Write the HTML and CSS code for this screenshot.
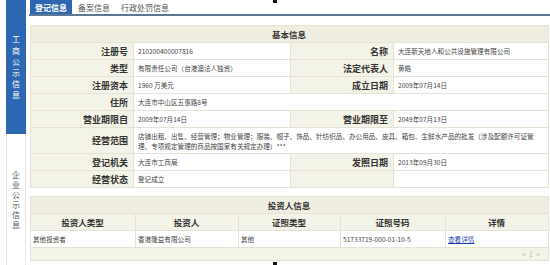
FILE: index.html
```html
<!DOCTYPE html>
<html lang="zh-CN">
  <head>
    <meta charset="UTF-8" />
    <title>登记信息</title>
    <link rel="stylesheet" href="styles.css">
  </head>
  <body>
    <div class="page">
      <div class="side">
        <div class="side-item active">
          <span>工</span><span>商</span><span>公</span><span>示</span><span>信</span><span>息</span>
        </div>
        <div class="side-item">
          <span>企</span><span>业</span><span>公</span><span>示</span><span>信</span><span>息</span>
        </div>
      </div>

      <div class="main">
        <div class="tabs">
          <a class="tab current">登记信息</a>
          <a class="tab">备案信息</a>
          <a class="tab">行政处罚信息</a>
        </div>

        <!-- 基本信息 -->
        <table class="info base">
          <colgroup>
            <col style="width: 103px" />
            <col style="width: 157px" />
            <col style="width: 103px" />
            <col style="width: 155px" />
          </colgroup>
          <tr class="title">
            <th colspan="4">基本信息</th>
          </tr>
          <tr>
            <th>注册号</th>
            <td>210200400007816</td>
            <th>名称</th>
            <td>大连新天地人和公共设施管理有限公司</td>
          </tr>
          <tr>
            <th>类型</th>
            <td>有限责任公司（台港澳法人独资）</td>
            <th>法定代表人</th>
            <td>黄皓</td>
          </tr>
          <tr>
            <th>注册资本</th>
            <td>1960 万美元</td>
            <th>成立日期</th>
            <td>2009年07月14日</td>
          </tr>
          <tr>
            <th>住所</th>
            <td colspan="3">大连市中山区五惠路8号</td>
          </tr>
          <tr>
            <th>营业期限自</th>
            <td>2009年07月14日</td>
            <th>营业期限至</th>
            <td>2049年07月13日</td>
          </tr>
          <tr class="tall">
            <th>经营范围</th>
            <td colspan="3" class="scope">店铺出租、出售、经营管理；物业管理；服装、帽子、饰品、针纺织品、办公用品、皮具、箱包、生鲜水产品的批发（涉及配额许可证管<br />理、专项规定管理的商品按国家有关规定办理）***</td>
          </tr>
          <tr>
            <th>登记机关</th>
            <td>大连市工商局</td>
            <th>发照日期</th>
            <td>2013年09月30日</td>
          </tr>
          <tr>
            <th>经营状态</th>
            <td>登记成立</td>
            <th></th>
            <td></td>
          </tr>
        </table>

        <!-- 投资人信息 -->
        <table class="info investors">
          <colgroup>
            <col style="width: 105px" />
            <col style="width: 103px" />
            <col style="width: 102px" />
            <col style="width: 105px" />
            <col style="width: 103px" />
          </colgroup>
          <tr class="title">
            <th colspan="5">投资人信息</th>
          </tr>
          <tr class="head">
            <th>投资人类型</th>
            <th>投资人</th>
            <th>证照类型</th>
            <th>证照号码</th>
            <th>详情</th>
          </tr>
          <tr>
            <td>其他投资者</td>
            <td>香港隆益有限公司</td>
            <td>其他</td>
            <td>51733719-000-01-10-5</td>
            <td><a class="detail">查看详情</a></td>
          </tr>
          <tr class="pager">
            <td colspan="5"><span>&lt;&nbsp; 1 &nbsp;&gt;</span></td>
          </tr>
        </table>
      </div>
    </div>

    <i class="marker top"></i>
    <i class="marker bottom"></i>
  </body>
</html>
```

FILE: styles.css
```css
body {
  margin: 0;
  background: #fff;
  font-family: "Noto Sans CJK SC", "Liberation Sans", sans-serif;
  color: #333;
  height: 265px;
  overflow: hidden;
  position: relative;
}

.page {
  display: flex;
  align-items: flex-start;
}

/* 左侧栏 */
.side {
  margin-left: 6px;
  width: 20px;
  display: flex;
  flex-direction: column;
}

.side-item {
  height: 131px;
  display: flex;
  flex-direction: column;
  align-items: center;
  justify-content: center;
  font-size: 8px;
  line-height: 10px;
  color: #555;
  border: 1px solid #e6e6e6;
  border-top: none;
}

.side-item.active {
  height: 134px;
  line-height: 11.2px;
  background: #2e67b1;
  color: #fff;
  border: none;
}

.main {
  flex: 1;
  margin-left: 3px;
}

/* 标签页 */
.tabs {
  display: flex;
  height: 14px;
  padding-left: 1px;
  border-bottom: 2px solid #5d7895;
}

.tab {
  display: flex;
  align-items: center;
  height: 14px;
  padding: 0 5px;
  margin-right: 1px;
  font-size: 8px;
  color: #555;
}

.tab.current {
  background: #2e67b1;
  color: #fff;
  font-weight: bold;
}

/* 信息表格 */
.info {
  width: 518px;
  table-layout: fixed;
  border-collapse: collapse;
  margin-left: 1px;
  border: 1px solid #dcdbcb;
}

.info th,
.info td {
  height: 16px;
  padding: 0 4px;
  border: 1px solid #e4e3d6;
  overflow: hidden;
  white-space: nowrap;
}

.info th {
  background: #f4f3e7;
  font-size: 9px;
  font-weight: bold;
  color: #333;
  text-align: right;
  padding-right: 5px;
}

.info td {
  font-size: 6.6px;
  color: #444;
  background: #fff;
}

.info .title th {
  background: #efeee0;
  text-align: center;
  font-size: 8.5px;
}

.base {
  margin-top: 9px;
}

.base .tall td,
.base .tall th {
  height: 25px;
}

.scope {
  line-height: 10px;
}

.investors {
  margin-top: 8px;
}

.investors .head th {
  text-align: center;
  font-size: 8.5px;
}

.investors td {
  padding-left: 2px;
}

.detail {
  color: #1d3fb0;
  text-decoration: underline;
}

.pager td {
  height: 12px;
  background: #f4f3e7;
  text-align: right;
  color: #bbb;
  font-size: 7px;
  padding-right: 8px;
}

/* 页面中的小标记 */
.marker {
  position: absolute;
  left: 273px;
  width: 4px;
  background: #111;
}

.marker.top {
  top: 0;
  height: 3px;
}

.marker.bottom {
  top: 262px;
  height: 3px;
}
```
